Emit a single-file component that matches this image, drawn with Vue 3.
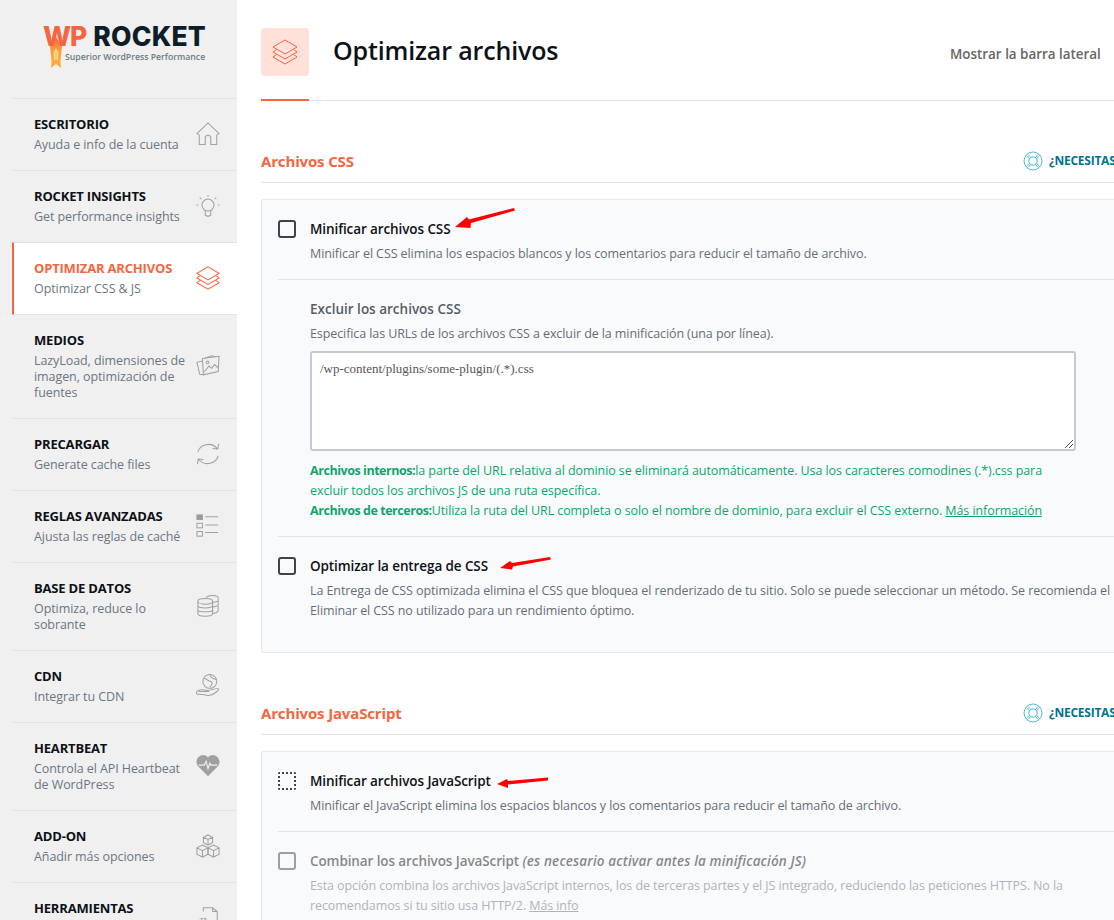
<script setup>
const nav = [
  { t: 'ESCRITORIO', d: 'Ayuda e info de la cuenta', i: 'home' },
  { t: 'ROCKET INSIGHTS', d: 'Get performance insights', i: 'bulb' },
  { t: 'OPTIMIZAR ARCHIVOS', d: 'Optimizar CSS & JS', i: 'layers', active: true },
  { t: 'MEDIOS', d: 'LazyLoad, dimensiones de imagen, optimización de fuentes', i: 'media' },
  { t: 'PRECARGAR', d: 'Generate cache files', i: 'sync' },
  { t: 'REGLAS AVANZADAS', d: 'Ajusta las reglas de caché', i: 'rules' },
  { t: 'BASE DE DATOS', d: 'Optimiza, reduce lo sobrante', i: 'db' },
  { t: 'CDN', d: 'Integrar tu CDN', i: 'cdn' },
  { t: 'HEARTBEAT', d: 'Controla el API Heartbeat de WordPress', i: 'heart' },
  { t: 'ADD-ON', d: 'Añadir más opciones', i: 'cubes' },
  { t: 'HERRAMIENTAS', d: '', i: 'tools' }
]
</script>

<template>
  <div class="page">
    <aside class="side">
      <div class="logo">
        <div class="logo-main"><span class="wp">WP</span> ROCKET</div>
        <div class="logo-sub">Superior WordPress Performance</div>
        <svg class="flame" width="14" height="32" viewBox="0 0 14 32">
          <defs>
            <linearGradient id="fl" x1="0" y1="0" x2="0" y2="1">
              <stop offset="0" stop-color="#f56640"/>
              <stop offset="0.45" stop-color="#f9a23c"/>
              <stop offset="1" stop-color="#fbb040"/>
            </linearGradient>
          </defs>
          <path d="M7 0 L13 9 L11.5 24 L12 31 L7 27 L2 31 L2.5 24 L1 9 Z" fill="url(#fl)"/>
          <path d="M7 11 L9.5 15 L9 24 L7 22 L5 24 L4.5 15 Z" fill="#fcd07a"/>
        </svg>
      </div>
      <nav class="nav">
        <a v-for="n in nav" :key="n.t" class="item" :class="{ active: n.active }">
          <div class="item-text">
            <div class="item-title">{{ n.t }}</div>
            <div v-if="n.d" class="item-desc">{{ n.d }}</div>
          </div>
          <svg class="item-icon" width="24" height="24" viewBox="0 0 26 26" fill="none" stroke="currentColor" stroke-width="1.1">
            <template v-if="n.i === 'home'">
              <path d="M1 12.5 L13 1 L25 12.5 L22.5 14 L22.5 24.5 L16 24.5 L16 17 C16 13.5 10 13.5 10 17 L10 24.5 L3.5 24.5 L3.5 14 Z"/>
            </template>
            <template v-else-if="n.i === 'bulb'">
              <circle cx="13" cy="12" r="6.5"/>
              <path d="M10 18 L10 23 Q13 25 16 23 L16 18 M13 1 V3 M4 4 L6 5.5 M22 4 L20 5.5 M0.5 12 H2.5 M23.5 12 H25.5"/>
            </template>
            <template v-else-if="n.i === 'layers'">
              <path d="M13 1 L25 8 L13 15 L1 8 Z M4.5 10.5 L1 13 L13 20 L25 13 L21.5 10.5 M4.5 15.5 L1 18 L13 25 L25 18 L21.5 15.5"/>
            </template>
            <template v-else-if="n.i === 'media'">
              <path d="M7 5 L25 2.5 L24 19 L8 22.5 Z"/>
              <path d="M7 7.5 L1 9 L4 22 L8 22.5 M10 4.5 L17 2 L21 3"/>
              <path d="M9 19.5 L14 13 L17 15.5 L20 11.5 L24 15"/>
              <circle cx="12.5" cy="9" r="1.5"/>
            </template>
            <template v-else-if="n.i === 'sync'">
              <path d="M2 11 C4 3 16 -1 23 7 M24.5 2 L23.5 7.5 L18 7 M24 15 C22 23 10 27 3 19 M1.5 24 L2.5 18.5 L8 19"/>
            </template>
            <template v-else-if="n.i === 'rules'">
              <rect x="1" y="1" width="6" height="5" fill="#9a9a9a"/>
              <rect x="1" y="10" width="6" height="5"/>
              <rect x="1" y="19" width="6" height="5"/>
              <path d="M10 3 H24 M10 12 H24 M10 20 H24"/>
            </template>
            <template v-else-if="n.i === 'db'">
              <ellipse cx="10" cy="8" rx="8" ry="3"/>
              <path d="M2 8 V21 C2 25 18 25 18 21 V8 M2 12.5 C2 16 18 16 18 12.5 M2 17 C2 20 18 20 18 17"/>
              <path d="M11 4 C13 1 24 1 24 4 V18 C24 20 20 21 18 21 M18 9 C20 9 24 8 24 7 M18 14 C20 14 24 13 24 12"/>
            </template>
            <template v-else-if="n.i === 'cdn'">
              <circle cx="15" cy="8" r="7.5"/>
              <path d="M9 5 C12 5 13 8 16 8 C18 8 18 12 15 14 M16 1 C15 3 18 5 22 6"/>
              <path d="M1 19 C3 16 8 17 12 18 C15 18 22 15 24 16 C26 17 20 22 15 23 C11 24 7 21 2 22 C0 22 0 20 1 19 Z M3 19 H14"/>
            </template>
            <template v-else-if="n.i === 'heart'">
              <path d="M13 24 L2 13 C-2 7 3 1 8 1 C10 1 12 2 13 4 C14 2 16 1 18 1 C23 1 28 7 24 13 Z" fill="currentColor" stroke="none"/>
              <path d="M3 12 H9 L11 8 L13 16 L15 10 L16 12 H23" stroke="#f0f0f1" stroke-width="1.2"/>
            </template>
            <template v-else-if="n.i === 'cubes'">
              <path d="M13 1 L18 3.5 V9.5 L13 12 L8 9.5 V3.5 Z M8 3.5 L13 6 L18 3.5 M13 6 V12"/>
              <path d="M7 12 L13 15 V22 L7 25 L1 22 V15 Z M1 15 L7 18 L13 15 M7 18 V25"/>
              <path d="M19 12 L25 15 V22 L19 25 L13 22 V15 Z M13 15 L19 18 L25 15 M19 18 V25"/>
            </template>
            <template v-else>
              <path d="M8 6 V2 H18 L23 6 V25 H14 M18 2 V6 H23"/>
              <circle cx="8" cy="19" r="2"/>
              <circle cx="8" cy="19" r="5.5" stroke-dasharray="2.5 1.2" stroke-width="1.6"/>
            </template>
          </svg>
        </a>
      </nav>
    </aside>

    <main class="main">
      <header class="head">
        <div class="head-badge">
          <svg width="26" height="26" viewBox="0 0 26 26" fill="none" stroke="#f56640" stroke-width="1">
            <path d="M13 1 L25 8 L13 15 L1 8 Z M4.5 10.5 L1 13 L13 20 L25 13 L21.5 10.5 M4.5 15.5 L1 18 L13 25 L25 18 L21.5 15.5"/>
          </svg>
        </div>
        <h1 class="head-title">Optimizar archivos</h1>
        <div class="head-toggle">Mostrar la barra lateral</div>
      </header>

      <section class="sec">
        <div class="sec-head">
          <h2 class="sec-title">Archivos CSS</h2>
          <div class="help">
            <svg width="20" height="20" viewBox="0 0 20 20" fill="none" stroke="#4fb8d6" stroke-width="1">
              <circle cx="10" cy="10" r="9"/>
              <circle cx="10" cy="10" r="4.2"/>
              <path d="M3.5 5 L7 8 M5 3.5 L8 7 M16.5 5 L13 8 M15 3.5 L12 7 M3.5 15 L7 12 M5 16.5 L8 13 M16.5 15 L13 12 M15 16.5 L12 13"/>
            </svg>
            <span>¿NECESITAS</span>
          </div>
        </div>

        <div class="card">
          <div class="opt opt-line">
            <span class="check"></span>
            <div class="opt-body">
              <div class="opt-title-wrap">
                <div class="opt-title">Minificar archivos CSS</div>
                <svg class="arrow arrow1" width="62" height="22" viewBox="0 0 62 22"><path d="M1 20 L13 10 L15 12.5 L60 1 L61 3.5 L17 16 L16.5 21 Z" fill="#f00"/></svg>
              </div>
              <p class="opt-desc">Minificar el CSS elimina los espacios blancos y los comentarios para reducir el tamaño de archivo.</p>
            </div>
          </div>
          <div class="sub opt-line">
            <div class="sub-title">Excluir los archivos CSS</div>
            <p class="opt-desc">Especifica las URLs de los archivos CSS a excluir de la minificación (una por línea).</p>
            <div class="ta-box">
              <div class="ta">/wp-content/plugins/some-plugin/(.*).css</div>
              <svg class="grip" width="10" height="10" viewBox="0 0 10 10" stroke="#555" stroke-width="1"><path d="M1 9 L9 1 M5 9 L9 5"/></svg>
            </div>
            <p class="green">
              <b>Archivos internos:</b>la parte del URL relativa al dominio se eliminará automáticamente. Usa los caracteres comodines (.*).css para excluir todos los archivos JS de una ruta específica.<br>
              <b>Archivos de terceros:</b>Utiliza la ruta del URL completa o solo el nombre de dominio, para excluir el CSS externo. <u>Más información</u>
            </p>
          </div>
          <div class="opt opt-last">
            <span class="check"></span>
            <div class="opt-body">
              <div class="opt-title-wrap">
                <div class="opt-title">Optimizar la entrega de CSS</div>
                <svg class="arrow arrow2" width="53" height="15" viewBox="0 0 53 15"><path d="M1 12 L11 5 L13 7 L51 1 L52 3.5 L14 10.5 L13 13.5 Z" fill="#f00"/></svg>
              </div>
              <p class="opt-desc">La Entrega de CSS optimizada elimina el CSS que bloquea el renderizado de tu sitio. Solo se puede seleccionar un método. Se recomienda el<br>Eliminar el CSS no utilizado para un rendimiento óptimo.</p>
            </div>
          </div>
        </div>
      </section>

      <section class="sec">
        <div class="sec-head">
          <h2 class="sec-title">Archivos JavaScript</h2>
          <div class="help">
            <svg width="20" height="20" viewBox="0 0 20 20" fill="none" stroke="#4fb8d6" stroke-width="1">
              <circle cx="10" cy="10" r="9"/>
              <circle cx="10" cy="10" r="4.2"/>
              <path d="M3.5 5 L7 8 M5 3.5 L8 7 M16.5 5 L13 8 M15 3.5 L12 7 M3.5 15 L7 12 M5 16.5 L8 13 M16.5 15 L13 12 M15 16.5 L12 13"/>
            </svg>
            <span>¿NECESITAS</span>
          </div>
        </div>
        <div class="card">
          <div class="opt opt-line">
            <span class="check dotted"></span>
            <div class="opt-body">
              <div class="opt-title-wrap">
                <div class="opt-title">Minificar archivos JavaScript</div>
                <svg class="arrow arrow3" width="53" height="13" viewBox="0 0 53 13"><path d="M1 8 L11 3 L12 5 L52 1.5 L52 4.5 L12 8.5 L12 12 Z" fill="#f00"/></svg>
              </div>
              <p class="opt-desc">Minificar el JavaScript elimina los espacios blancos y los comentarios para reducir el tamaño de archivo.</p>
            </div>
          </div>
          <div class="opt opt-last">
            <span class="check off"></span>
            <div class="opt-body off-text">
              <div class="opt-title">Combinar los archivos JavaScript <i>(es necesario activar antes la minificación JS)</i></div>
              <p class="opt-desc">Esta opción combina los archivos JavaScript internos, los de terceras partes y el JS integrado, reduciendo las peticiones HTTPS. No la<br>recomendamos si tu sitio usa HTTP/2. <u>Más info</u></p>
            </div>
          </div>
        </div>
      </section>
    </main>
  </div>
</template>

<style>
html, body { margin: 0; background: #fff; overflow: hidden; }
</style>

<style scoped>
.page {
  display: flex;
  width: 1114px;
  height: 920px;
  overflow: hidden;
  font-family: "Open Sans", "Noto Sans", sans-serif;
  background: #fff;
}
.side {
  flex: 0 0 237px;
  width: 237px;
  background: #f0f0f1;
  padding-left: 12px;
  box-sizing: border-box;
}
.logo {
  height: 98px;
  box-sizing: border-box;
  padding: 23px 0 0 31px;
  position: relative;
}
.flame { position: absolute; left: 37px; top: 37px; }
.logo-main {
  font-family: "Inter", sans-serif;
  font-weight: 800;
  font-size: 26.5px;
  line-height: 26px;
  color: #0e1e28;
  letter-spacing: 0.2px;
  white-space: nowrap;
}
.wp { color: #f56640; position: relative; z-index: 1; letter-spacing: -1px; margin-right: 1px; }
.logo-sub {
  font-size: 8.7px;
  line-height: 12px;
  font-weight: 600;
  color: #6d7a82;
  margin: 2px 0 0 22px;
  white-space: nowrap;
}
.nav { border-top: 1px solid #e2e3ea; }
.item {
  display: flex;
  justify-content: space-between;
  align-items: center;
  padding: 16px 17px 17px 22px;
  border-bottom: 1px solid #e2e3ea;
  min-height: 72px;
  box-sizing: border-box;
  color: #a0a0a0;
}
.item.active {
  background: #fff;
  border-left: 2px solid #f56640;
  padding-left: 20px;
  color: #f56640;
  margin-top: -1px;
  border-top: 1px solid #e2e3ea;
  min-height: 73px;
}
.item-text { width: 158px; align-self: flex-start; }
.item-title {
  font-size: 13px;
  line-height: 18px;
  font-weight: 700;
  color: #0e1116;
  white-space: nowrap;
  letter-spacing: -0.18px;
}
.active .item-title { color: #f56640; }
.item-desc {
  margin-top: 4px;
  font-size: 12.5px;
  line-height: 16px;
  color: #6d7680;
  letter-spacing: -0.08px;
}
.item-icon { flex: none; }
.main {
  flex: 1;
  min-width: 0;
  padding-left: 24px;
  overflow: hidden;
}
.head {
  display: flex;
  align-items: flex-start;
  height: 101px;
  box-sizing: border-box;
  border-bottom: 1px solid #e2e3ea;
  position: relative;
  padding-top: 28px;
}
.head::after {
  content: "";
  position: absolute;
  left: 0;
  bottom: -1px;
  width: 48px;
  height: 2px;
  background: #f56640;
}
.head-badge {
  width: 48px;
  height: 48px;
  border-radius: 3px;
  background: #ffe1da;
  display: flex;
  align-items: center;
  justify-content: center;
}
.head-title {
  margin: 0 0 0 24px;
  font-size: 25px;
  line-height: 44px;
  font-weight: 600;
  color: #0e1116;
  letter-spacing: -0.15px;
}
.head-toggle {
  position: absolute;
  left: 689px;
  top: 45px;
  font-size: 13.4px;
  line-height: 18px;
  font-weight: 600;
  color: #666;
  white-space: nowrap;
}
.sec { padding-top: 47px; }
.sec-head {
  display: flex;
  align-items: center;
  height: 34px;
  border-bottom: 1px solid #e2e3ea;
  position: relative;
}
.sec-title {
  margin: -8px 0 0;
  font-size: 15px;
  line-height: 24px;
  font-weight: 700;
  color: #f56640;
  letter-spacing: -0.15px;
}
.help {
  position: absolute;
  left: 762px;
  top: 3px;
  display: flex;
  align-items: center;
  gap: 6px;
  font-size: 12px;
  line-height: 20px;
  font-weight: 700;
  color: #00748f;
  white-space: nowrap;
  letter-spacing: -0.25px;
}
.card {
  margin-top: 16px;
  width: 900px;
  border: 1px solid #e8e9ed;
  background: #f9fafb;
  border-radius: 2px;
  box-sizing: border-box;
  padding-left: 16px;
}
.opt { display: flex; position: relative; padding-top: 19px; }
.opt-line { border-bottom: 1px solid #e2e3ea; padding-bottom: 16px; box-sizing: border-box; }
.opt.opt-line { height: 80px; }
.opt-last { padding-bottom: 31px; }
.check {
  flex: none;
  width: 14px;
  height: 14px;
  border: 2px solid #3d4450;
  border-radius: 3px;
  margin: 1px 14px 0 0;
}
.check.dotted { border: 2px dotted #3d4450; border-radius: 2px; }
.check.off { border-color: #9d9fa3; }
.opt-body { min-width: 0; }
.opt-title-wrap { position: relative; }
.opt-title {
  font-size: 13.5px;
  line-height: 20px;
  font-weight: 600;
  color: #0e1116;
  white-space: nowrap;
  letter-spacing: -0.1px;
}
.opt-title i { letter-spacing: 0.14px; }
.opt-desc {
  margin: 5px 0 0;
  font-size: 12.5px;
  line-height: 20px;
  color: #666e78;
  white-space: nowrap;
  letter-spacing: -0.09px;
}
.arrow { position: absolute; }
.arrow1 { left: 144px; top: -12px; }
.arrow2 { left: 189px; top: 0; }
.arrow3 { left: 186px; top: 5px; }
.sub { padding: 19px 0 15px 32px; }
.sub-title {
  font-size: 13.5px;
  line-height: 20px;
  font-weight: 600;
  color: #555d66;
}
.ta-box {
  position: relative;
  margin-top: 7px;
  width: 766px;
  height: 100px;
  border: 2px solid #c3cad6;
  box-sizing: border-box;
  background: #fff;
  border-radius: 3px;
}
.ta {
  font-family: "Liberation Serif", serif;
  font-size: 13px;
  line-height: 16px;
  color: #555;
  padding: 8px;
}
.grip { position: absolute; right: 0; bottom: 0; }
.green {
  margin: 10px 0 0;
  font-size: 12.5px;
  line-height: 20px;
  color: #0aa86c;
  letter-spacing: -0.08px;
  width: 745px;
}
.green b { font-weight: 700; letter-spacing: -0.45px; }
.off-text { opacity: 0.5; }
</style>
